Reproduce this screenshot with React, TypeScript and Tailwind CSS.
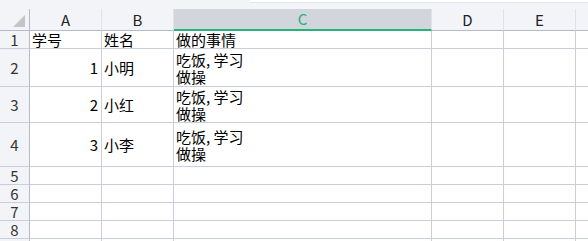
import React from "react";

const font = { fontFamily: '"Noto Sans CJK SC", "Noto Sans", sans-serif' };

const rowHeights = ["h-[18px]", "h-[38px]", "h-[36px]", "h-[44px]", "h-[18px]", "h-[18px]", "h-[18px]", "h-[18px]", "h-[18px]"];

type Row = { a?: string; b?: string; c?: string[] };
const rows: Row[] = [
  { a: "学号", b: "姓名", c: ["做的事情"] },
  { a: "1", b: "小明", c: ["吃饭, 学习", "做操"] },
  { a: "2", b: "小红", c: ["吃饭, 学习", "做操"] },
  { a: "3", b: "小李", c: ["吃饭, 学习", "做操"] },
  {},
  {},
  {},
  {},
  {},
];

const cell = "border-r border-b border-[#c9cedd] flex items-center";

export default function App() {
  return (
    <div className="w-[588px] h-[241px] overflow-hidden bg-white text-[15px] text-black" style={font}>
      <div className="h-[9px] bg-[#f3f4f7] flex">
        <div className="w-[250px]" />
        <div className="flex-1 h-[3px] bg-white border-b border-[#e3e5ea]" />
      </div>
      <div className="grid grid-cols-[30px_72px_72px_258px_72px_72px_1fr]">
        <div className="h-[22px] bg-[#f3f4f7] border-r border-b border-[#b3bacb] relative">
          <div className="absolute right-[4px] bottom-[3px] w-0 h-0 border-l-[12px] border-l-transparent border-b-[12px] border-b-[#c3c5c9]" />
        </div>
        <div className="h-[22px] bg-[#f3f4f7] border-r border-r-[#dfe2e9] border-b border-b-[#b3bacb] flex items-center justify-center text-[#222] leading-[18px]">A</div>
        <div className="h-[22px] bg-[#f3f4f7] border-r border-r-[#dfe2e9] border-b border-b-[#b3bacb] flex items-center justify-center text-[#222] leading-[18px]">B</div>
        <div className="h-[22px] bg-[#d2d5dc] border-r border-r-[#dfe2e9] border-b-2 border-b-[#22b573] flex items-center justify-center text-[#22b573] leading-[18px]">C</div>
        <div className="h-[22px] bg-[#f3f4f7] border-r border-r-[#dfe2e9] border-b border-b-[#b3bacb] flex items-center justify-center text-[#222] leading-[18px]">D</div>
        <div className="h-[22px] bg-[#f3f4f7] border-r border-r-[#dfe2e9] border-b border-b-[#b3bacb] flex items-center justify-center text-[#222] leading-[18px]">E</div>
        <div className="h-[22px] bg-[#f3f4f7] border-b border-b-[#b3bacb]" />
        {rows.map((r, i) => {
          const h = rowHeights[i];
          const isNum = r.a !== undefined && /^\d+$/.test(r.a);
          return (
            <React.Fragment key={i}>
              <div className={`${h} bg-[#f3f4f7] border-r border-r-[#b3bacb] border-b border-b-[#c9cedd] flex items-center justify-center text-[#333] leading-[16px]`}>
                {i < 8 ? i + 1 : ""}
              </div>
              <div className={`${h} ${cell} ${isNum ? "justify-end pr-[3px]" : "pl-[2px]"} leading-[16px]`}>{r.a}</div>
              <div className={`${h} ${cell} pl-[2px] leading-[16px]`}>{r.b}</div>
              <div className={`${h} ${cell} pl-[2px]`}>
                {r.c && (
                  <div className={r.c.length > 1 ? "leading-[17px]" : "leading-[16px]"}>
                    {r.c.map((l, j) => (
                      <div key={j}>{l}</div>
                    ))}
                  </div>
                )}
              </div>
              <div className={`${h} ${cell}`} />
              <div className={`${h} ${cell}`} />
              <div className={`${h} border-b border-[#c9cedd]`} />
            </React.Fragment>
          );
        })}
      </div>
    </div>
  );
}
